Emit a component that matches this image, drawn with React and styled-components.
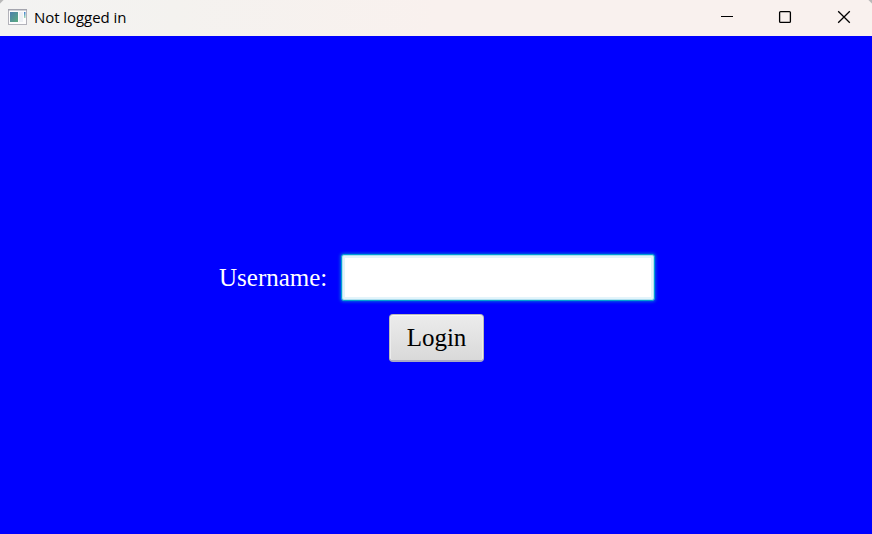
import React from "react";
import styled, { createGlobalStyle } from "styled-components";

const GlobalStyle = createGlobalStyle`
  * { box-sizing: border-box; }
  body { margin: 0; background: #000; }
`;

const Window = styled.div`
  display: flex;
  flex-direction: column;
  width: 872px;
  height: 534px;
  overflow: hidden;
  background: #0000ff;
`;

const TitleBar = styled.header`
  display: flex;
  align-items: center;
  flex: none;
  height: 36px;
  padding-left: 8px;
  background:
    linear-gradient(135deg, #b8b8b8 2px, transparent 3px) left top / 8px 8px no-repeat,
    linear-gradient(225deg, #b8b8b8 2px, transparent 3px) right top / 8px 8px no-repeat,
    linear-gradient(90deg, #f3f3f2 0%, #f4f2ef 20%, #f9f1ee 50%, #f9f1ee 100%);
`;

const AppIcon = styled.svg`
  display: block;
  flex: none;
  width: 19px;
  height: 16px;
  margin-top: -3px;
`;

const Title = styled.span`
  margin: -2px 0 0 7px;
  flex: 1;
  font: 15px/20px "Open Sans", "Noto Sans", sans-serif;
  letter-spacing: -0.06px;
  color: #000;
  white-space: nowrap;
`;

const Controls = styled.div`
  display: flex;
  align-self: stretch;
`;

const WindowButton = styled.button`
  display: flex;
  align-items: center;
  justify-content: center;
  width: 58px;
  height: 34px;
  padding: 0 0 0 ${({ $shift }) => $shift || 0}px;
  border: 0;
  background: transparent;
`;

const Glyph = styled.svg`
  display: block;
  width: 14px;
  height: 14px;
  fill: none;
  stroke: #000;
  stroke-width: 1.3;
`;

const LoginForm = styled.form`
  display: flex;
  flex-direction: column;
  align-items: center;
  flex: 1;
  padding-top: 218px;
  font-family: "Liberation Serif", serif;
  font-size: 25px;
`;

const FieldRow = styled.div`
  display: flex;
  align-items: center;
  height: 47px;
  margin-left: 2px;
`;

const Label = styled.label`
  width: 122px;
  color: #fff;
`;

const TextField = styled.input`
  width: 314px;
  height: 47px;
  padding: 4px 12px;
  border: 1px solid #039ed3;
  border-radius: 3px;
  outline: none;
  background: #fff;
  font: inherit;
  caret-color: transparent;
  box-shadow: inset 0 0 0 1px #b0e0f0, inset 0 0 0 3px #e3f4fa, 0 0 3px 1px rgba(3, 158, 211, 0.6);
`;

const LoginButton = styled.button`
  width: 95px;
  height: 48px;
  margin-top: 13px;
  padding: 1px 0 0 1px;
  border: 1px solid #bababa;
  border-bottom: 2px solid #a9a9c4;
  border-radius: 4px;
  background: linear-gradient(#ececec, #d9d9d9);
  box-shadow: inset 0 1px 0 #f7f7f7, inset 1px 0 0 #ededed, inset -1px 0 0 #ededed;
  font: inherit;
  color: #000;
`;

export default function App() {
  return (
    <>
      <GlobalStyle />
      <Window>
        <TitleBar>
          <AppIcon viewBox="0 0 19 16">
            <defs>
              <linearGradient id="pane" x1="0" y1="0" x2="1" y2="1">
                <stop offset="0" stopColor="#4c7fae" />
                <stop offset="1" stopColor="#5aab7e" />
              </linearGradient>
              <linearGradient id="bar" x1="0" y1="0" x2="0" y2="1">
                <stop offset="0" stopColor="#3d7dd0" />
                <stop offset="1" stopColor="#a5dfb4" />
              </linearGradient>
            </defs>
            <rect x="0.5" y="0.5" width="18" height="15" fill="#fcfcfc" stroke="#b3b3ba" />
            <rect x="0" y="0" width="19" height="1.5" fill="#a4a5ae" />
            <rect x="2" y="3" width="8" height="10" fill="url(#pane)" />
            <rect x="11" y="3" width="4" height="10" fill="#edf0f4" />
            <rect x="16" y="3" width="1.5" height="6" fill="url(#bar)" />
          </AppIcon>
          <Title>Not logged in</Title>
          <Controls>
            <WindowButton aria-label="Minimize">
              <Glyph viewBox="0 0 14 14"><path d="M1 6.5h12" strokeWidth="1" /></Glyph>
            </WindowButton>
            <WindowButton aria-label="Maximize">
              <Glyph viewBox="0 0 14 14"><rect x="1.6" y="1.6" width="10.8" height="10.8" rx="1" /></Glyph>
            </WindowButton>
            <WindowButton aria-label="Close" $shift={2}>
              <Glyph viewBox="0 0 14 14"><path d="M1.2 1.2l11.6 11.6M12.8 1.2L1.2 12.8" /></Glyph>
            </WindowButton>
          </Controls>
        </TitleBar>
        <LoginForm onSubmit={(event) => event.preventDefault()}>
          <FieldRow>
            <Label htmlFor="username">Username:</Label>
            <TextField id="username" type="text" autoComplete="off" />
          </FieldRow>
          <LoginButton type="submit">Login</LoginButton>
        </LoginForm>
      </Window>
    </>
  );
}
